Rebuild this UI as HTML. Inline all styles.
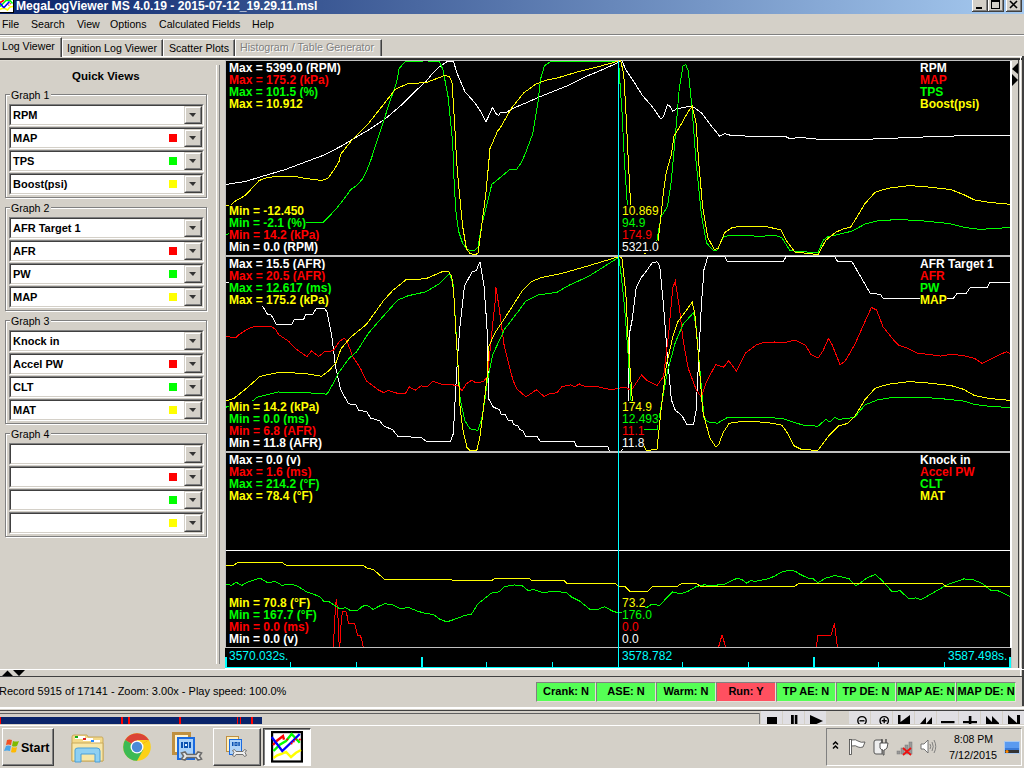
<!DOCTYPE html>
<html><head><meta charset="utf-8">
<style>
*{margin:0;padding:0;box-sizing:border-box}
html,body{width:1024px;height:768px;overflow:hidden;background:#d4d0c8;font-family:"Liberation Sans",sans-serif;font-size:11px;color:#000;position:relative}
.a{position:absolute}
.t{position:absolute;white-space:pre;line-height:1}
.b{font-weight:bold}
.combo{position:absolute;left:9px;width:195px;height:22px;background:#fff;border-top:1px solid #808080;border-left:1px solid #808080;border-right:1px solid #fff;border-bottom:1px solid #fff}
.combo:before{content:"";position:absolute;left:0;top:0;right:0;bottom:0;border-top:1px solid #404040;border-left:1px solid #404040;border-right:1px solid #d4d0c8;border-bottom:1px solid #d4d0c8}
.combo .lbl{position:absolute;left:3px;top:5px;font-weight:bold;font-size:11px;white-space:pre;line-height:1}
.combo .btn{position:absolute;left:174px;top:1px;width:18px;height:18px;background:#d4d0c8;border-top:1px solid #d4d0c8;border-left:1px solid #d4d0c8;border-right:1px solid #404040;border-bottom:1px solid #404040}
.combo .btn:before{content:"";position:absolute;left:0;top:0;right:0;bottom:0;border-top:1px solid #fff;border-left:1px solid #fff;border-right:1px solid #808080;border-bottom:1px solid #808080}
.combo .btn:after{content:"";position:absolute;left:4px;top:6px;border-left:4px solid transparent;border-right:3px solid transparent;border-top:4px solid #333;width:0;height:0}
.combo .sq{position:absolute;left:159px;top:28px;width:8px;height:8px}
.grp{position:absolute;left:5px;width:202px;border:1px solid #808080;box-shadow:inset 1px 1px 0 #fff,1px 1px 0 #fff}
.grp .gl{position:absolute;left:4px;top:-5px;background:#d4d0c8;padding:0 2px 0 1px;font-size:10.6px;white-space:pre;line-height:1}
.graph{position:absolute;left:226px;width:784px;height:194px;background:#000;overflow:hidden}
.lg{position:absolute;font-weight:bold;font-size:12px;white-space:pre;line-height:12px;background:#000}
.cv{position:absolute;font-size:12px;white-space:pre;line-height:12px;background:#000}
.ind{position:absolute;top:682px;width:60px;height:20px;border-top:1px solid #808080;border-left:1px solid #808080;border-right:1px solid #e4e0d8;border-bottom:1px solid #e4e0d8;background:#55ff55;font-weight:bold;font-size:11px;text-align:center;line-height:17px;white-space:nowrap;overflow:hidden}
.tb{position:absolute;top:711px;width:21px;height:13px;background:#e0dfe3}
</style></head><body>

<!-- title bar -->
<div class="a" style="left:0;top:0;width:1024px;height:14px;background:linear-gradient(to right,#0a246a,#a6caf0)"></div>
<svg class="a" style="left:0;top:0" width="15" height="14" viewBox="0 0 15 14">
<rect x="0" y="0" width="13" height="12" fill="#fff"/>
<rect x="13" y="0" width="1" height="13" fill="#000"/><rect x="0" y="12" width="14" height="1" fill="#000"/>
<polyline points="0,9.5 2,8.5 5,8.5 7.5,10 10,7 13,6.5" fill="none" stroke="#ff0" stroke-width="1.6"/>
<polyline points="0,6.5 2,4.5 4,2.5 6,0.5 10,0.5 12.5,3.5" fill="none" stroke="#0f0" stroke-width="1.6"/>
<polyline points="0,2.5 2,1.5 4,0" fill="none" stroke="#f00" stroke-width="1.6"/>
<polyline points="0,3.5 1.5,4.5 2.5,6.5 4,7.5 9.5,1.5" fill="none" stroke="#00f" stroke-width="1.6"/>
<polyline points="8.5,5.5 11,3" fill="none" stroke="#f00" stroke-width="1.2" stroke-dasharray="1,1"/>
</svg>
<div class="t b" style="left:16px;top:0px;font-size:12.15px;color:#fff">MegaLogViewer MS 4.0.19 - 2015-07-12_19.29.11.msl</div>
<!-- window buttons -->
<div class="a" style="left:972px;top:0;width:16px;height:12px;background:#d4d0c8;border-right:1px solid #404040;border-bottom:1px solid #404040;box-shadow:inset 1px 0 0 #fff,inset -1px -1px 0 #808080"></div>
<div class="a" style="left:988px;top:0;width:16px;height:12px;background:#d4d0c8;border-right:1px solid #404040;border-bottom:1px solid #404040;box-shadow:inset 1px 0 0 #fff,inset -1px -1px 0 #808080"></div>
<div class="a" style="left:1006px;top:0;width:16px;height:12px;background:#d4d0c8;border-right:1px solid #404040;border-bottom:1px solid #404040;box-shadow:inset 1px 0 0 #fff,inset -1px -1px 0 #808080"></div>

<div class="a" style="left:976px;top:7px;width:6px;height:2px;background:#000"></div>
<div class="a" style="left:991px;top:0px;width:9px;height:9px;border:1px solid #000;border-top:2px solid #000"></div>
<svg class="a" style="left:1009px;top:0" width="10" height="9" viewBox="0 0 10 9"><path d="M1,1 L8,8 M8,1 L1,8" stroke="#000" stroke-width="1.6"/></svg>
<!-- menu -->
<div class="t" style="left:2px;top:19px;font-size:10.6px">File</div>
<div class="t" style="left:31px;top:19px;font-size:10.6px">Search</div>
<div class="t" style="left:77px;top:19px;font-size:10.6px">View</div>
<div class="t" style="left:110px;top:19px;font-size:10.6px">Options</div>
<div class="t" style="left:159px;top:19px;font-size:10.6px">Calculated Fields</div>
<div class="t" style="left:252px;top:19px;font-size:10.6px">Help</div>
<div class="a" style="left:0;top:34px;width:1024px;height:1px;background:#808080"></div>
<div class="a" style="left:0;top:35px;width:1024px;height:1px;background:#fff"></div>

<!-- tabs -->
<div class="a" style="left:0;top:56px;width:1024px;height:1px;background:#fff"></div>
<div class="a" style="left:0;top:37px;width:62px;height:20px;background:#d4d0c8;border-top:1px solid #fff;border-right:1px solid #404040;box-shadow:inset -1px 0 0 #808080"></div>
<div class="t" style="left:2px;top:41px;font-size:10.6px">Log Viewer</div>
<div class="a" style="left:62px;top:39px;width:101px;height:17px;border-top:1px solid #fff;border-left:1px solid #fff;border-right:1px solid #404040;box-shadow:inset -1px 0 0 #808080"></div>
<div class="t" style="left:67px;top:43px;font-size:10.6px">Ignition Log Viewer</div>
<div class="a" style="left:163px;top:39px;width:72px;height:17px;border-top:1px solid #fff;border-left:1px solid #fff;border-right:1px solid #404040;box-shadow:inset -1px 0 0 #808080"></div>
<div class="t" style="left:169px;top:43px;font-size:10.6px">Scatter Plots</div>
<div class="a" style="left:235px;top:39px;width:147px;height:17px;border-top:1px solid #fff;border-left:1px solid #fff;border-right:1px solid #404040;box-shadow:inset -1px 0 0 #808080"></div>
<div class="t" style="left:241px;top:43px;font-size:10.7px;color:#fff">Histogram / Table Generator</div>
<div class="t" style="left:240px;top:42px;font-size:10.7px;color:#808080">Histogram / Table Generator</div>

<div class="a" style="left:0;top:58px;width:1024px;height:1px;background:#3c3c3c"></div>
<div class="a" style="left:0;top:59px;width:1024px;height:1px;background:#2c2c2c"></div>
<div class="a" style="left:0;top:60px;width:225px;height:1px;background:#e0dcd4"></div>

<!-- left panel -->
<div class="t b" style="left:72px;top:71px;font-size:11.5px">Quick Views</div>
<div class="grp" style="top:94px;height:104px"><div class="gl">Graph 1</div></div>
<div class="combo" style="top:104px"><div class="lbl">RPM</div><div class="btn"></div></div>
<div class="combo" style="top:127px"><div class="lbl">MAP</div><div class="sq" style="left:159px;top:6px;background:#ff0000"></div><div class="btn"></div></div>
<div class="combo" style="top:150px"><div class="lbl">TPS</div><div class="sq" style="left:159px;top:6px;background:#00ff00"></div><div class="btn"></div></div>
<div class="combo" style="top:173px"><div class="lbl">Boost(psi)</div><div class="sq" style="left:159px;top:6px;background:#ffff00"></div><div class="btn"></div></div>
<div class="grp" style="top:207px;height:104px"><div class="gl">Graph 2</div></div>
<div class="combo" style="top:217px"><div class="lbl">AFR Target 1</div><div class="btn"></div></div>
<div class="combo" style="top:240px"><div class="lbl">AFR</div><div class="sq" style="left:159px;top:6px;background:#ff0000"></div><div class="btn"></div></div>
<div class="combo" style="top:263px"><div class="lbl">PW</div><div class="sq" style="left:159px;top:6px;background:#00ff00"></div><div class="btn"></div></div>
<div class="combo" style="top:286px"><div class="lbl">MAP</div><div class="sq" style="left:159px;top:6px;background:#ffff00"></div><div class="btn"></div></div>
<div class="grp" style="top:320px;height:104px"><div class="gl">Graph 3</div></div>
<div class="combo" style="top:330px"><div class="lbl">Knock in</div><div class="btn"></div></div>
<div class="combo" style="top:353px"><div class="lbl">Accel PW</div><div class="sq" style="left:159px;top:6px;background:#ff0000"></div><div class="btn"></div></div>
<div class="combo" style="top:376px"><div class="lbl">CLT</div><div class="sq" style="left:159px;top:6px;background:#00ff00"></div><div class="btn"></div></div>
<div class="combo" style="top:399px"><div class="lbl">MAT</div><div class="sq" style="left:159px;top:6px;background:#ffff00"></div><div class="btn"></div></div>
<div class="grp" style="top:433px;height:104px"><div class="gl">Graph 4</div></div>
<div class="combo" style="top:443px"><div class="lbl"></div><div class="btn"></div></div>
<div class="combo" style="top:466px"><div class="lbl"></div><div class="sq" style="left:159px;top:6px;background:#ff0000"></div><div class="btn"></div></div>
<div class="combo" style="top:489px"><div class="lbl"></div><div class="sq" style="left:159px;top:6px;background:#00ff00"></div><div class="btn"></div></div>
<div class="combo" style="top:512px"><div class="lbl"></div><div class="sq" style="left:159px;top:6px;background:#ffff00"></div><div class="btn"></div></div>

<!-- splitter -->
<div class="a" style="left:216px;top:65px;width:1px;height:599px;background:#fff"></div>
<div class="a" style="left:219px;top:65px;width:1px;height:599px;background:#808080"></div>

<!-- graph frame -->
<div class="a" style="left:225px;top:60px;width:787px;height:609px;background:#c0c0c0"></div>
<div class="graph" style="top:61px"></div>
<div class="graph" style="top:257px"></div>
<div class="graph" style="top:453px"></div>
<div class="a" style="left:225px;top:648px;width:786px;height:19px;background:#000"></div>
<svg class="a" style="left:226px;top:60px" width="784" height="195" viewBox="0 0 784 195" shape-rendering="crispEdges">
<polyline points="0.0,124.4 19.5,121.5 35.2,116.6 58.6,109.8 82.0,101.0 96.4,95.7 114.6,86.5 127.6,78.7 143.2,69.6 158.9,59.2 177.0,43.6 190.0,30.5 200.0,21.4 205.2,15.0 213.0,7.1 222.0,1.1 227.3,1.1 231.2,13.6 239.0,31.8 249.5,43.6 254.7,51.4 259.9,61.8 262.5,56.6 266.4,47.5 270.3,54.0 272.9,55.3 274.0,52.8 280.0,52.8 285.7,48.8 297.4,44.0 313.0,37.1 332.6,29.3 342.4,25.4 356.0,18.6 361.9,15.7 371.7,11.7 391.2,3.0 394.0,0.6 395.9,0.6 399.8,9.7 407.6,21.4 416.7,35.8 425.9,46.2 435.0,59.2 437.6,56.6 441.5,44.9 444.0,46.2 446.7,51.4 450.6,48.8 459.7,47.0 466.2,46.2 475.3,52.7 483.1,63.1 493.6,76.1 498.8,73.5 505.3,75.6 522.2,76.1 558.7,76.1 563.9,78.7 574.3,77.4 592.0,79.2 612.8,80.0 657.1,78.7 685.8,77.4 722.2,76.1 753.5,75.6 784.0,75.3" fill="none" stroke="#ffffff" stroke-width="1"/>
<polyline points="0.0,174.6 14.0,170.0 78.0,162.0 97.6,162.0 109.4,149.8 117.2,140.0 125.0,129.3 130.9,125.4 136.7,118.6 140.6,110.8 144.5,101.0 153.6,73.5 164.0,41.0 170.6,22.7 173.2,8.4 179.7,1.1 200.0,1.0 213.0,1.1 217.0,9.7 222.1,37.0 226.0,76.0 227.7,101.0 227.7,112.7 229.7,149.8 232.6,171.3 236.5,183.0 241.4,189.9 248.2,190.5 252.1,187.0 256.0,163.5 260.0,147.9 265.8,124.4 271.7,119.6 283.4,109.8 290.2,109.8 295.1,103.0 299.0,94.4 306.8,73.5 312.0,42.3 314.6,18.8 318.5,5.8 325.0,1.1 392.7,1.1 393.3,13.6 395.9,50.0 398.5,102.2 401.1,141.2 406.0,180.0 419.0,190.0 431.0,180.3 435.0,156.9 441.5,146.4 445.4,120.4 449.3,76.1 453.2,29.2 457.1,5.8 459.7,4.5 462.3,11.0 466.2,50.0 470.1,102.2 475.3,154.2 480.5,183.0 487.0,190.2 491.0,190.2 497.5,176.4 509.2,175.0 535.2,176.4 548.2,175.0 556.0,177.7 563.9,190.7 592.0,192.8 597.2,180.3 602.4,176.4 610.2,175.0 625.9,171.2 638.9,164.1 651.9,160.8 672.7,159.5 696.2,160.8 722.2,163.4 737.8,167.3 753.5,169.3 769.0,168.6 784.0,167.3" fill="none" stroke="#00ff00" stroke-width="1"/>
<polyline points="0.0,145.5 5.0,145.5 7.8,142.0 19.5,135.2 33.2,120.5 39.0,118.2 50.8,116.2 68.4,116.2 78.1,118.2 95.7,120.5 101.6,118.6 107.4,110.8 113.3,101.0 114.6,94.4 125.0,81.3 140.6,65.7 156.2,46.2 169.3,29.2 182.3,23.5 200.0,22.7 218.2,15.7 223.4,16.2 226.0,22.7 228.6,63.0 230.6,101.0 232.6,124.4 236.5,165.5 240.4,188.9 244.3,193.8 250.2,194.4 252.1,192.8 256.0,163.5 260.0,132.2 262.9,101.0 263.8,89.1 271.6,71.0 274.0,68.4 285.7,47.9 297.4,33.2 309.2,24.4 318.9,20.5 332.6,17.6 352.1,11.7 371.7,6.9 389.2,2.0 392.7,1.1 394.6,0.6 397.7,13.6 399.8,50.0 402.4,102.2 405.0,151.6 411.0,185.0 418.0,193.3 431.0,190.7 433.7,167.3 437.6,130.8 440.2,112.6 445.4,94.4 448.0,76.1 455.8,63.1 462.3,51.4 466.2,46.2 470.1,63.1 472.7,102.2 476.6,146.4 481.8,177.7 488.4,189.4 492.3,188.1 498.8,172.5 506.6,167.3 522.2,166.0 537.8,166.0 554.8,169.9 560.0,180.3 569.0,192.0 592.0,194.6 599.8,180.3 610.2,172.0 618.0,168.6 624.5,167.3 631.0,156.9 638.9,143.8 649.3,132.1 662.3,128.2 683.1,125.6 701.4,126.9 724.8,129.5 737.8,134.7 748.2,139.9 763.9,142.5 784.0,144.3" fill="none" stroke="#ffff00" stroke-width="1"/>
</svg>
<div class="lg" style="left:229px;top:62px;color:#ffffff">Max = 5399.0 (RPM)</div>
<div class="lg" style="left:229px;top:74px;color:#ff0000">Max = 175.2 (kPa)</div>
<div class="lg" style="left:229px;top:86px;color:#00ff00">Max = 101.5 (%)</div>
<div class="lg" style="left:229px;top:98px;color:#ffff00">Max = 10.912</div>
<div class="lg" style="left:229px;top:205px;color:#ffff00">Min = -12.450</div>
<div class="lg" style="left:229px;top:217px;color:#00ff00">Min = -2.1 (%)</div>
<div class="lg" style="left:229px;top:229px;color:#ff0000">Min = 14.2 (kPa)</div>
<div class="lg" style="left:229px;top:241px;color:#ffffff">Min = 0.0 (RPM)</div>
<div class="lg" style="left:920px;top:62px;color:#ffffff">RPM</div>
<div class="lg" style="left:920px;top:74px;color:#ff0000">MAP</div>
<div class="lg" style="left:920px;top:86px;color:#00ff00">TPS</div>
<div class="lg" style="left:920px;top:98px;color:#ffff00">Boost(psi)</div>
<div class="cv" style="left:622px;top:205px;color:#ffff00">10.869</div>
<div class="cv" style="left:622px;top:217px;color:#00ff00">94.9</div>
<div class="cv" style="left:622px;top:229px;color:#ff0000">174.9</div>
<div class="cv" style="left:622px;top:241px;color:#ffffff">5321.0</div>
<svg class="a" style="left:226px;top:256px" width="784" height="195" viewBox="0 0 784 195" shape-rendering="crispEdges">
<polyline points="-1.0,26.4 5.0,26.4 14.0,36.0 36.1,49.2 41.4,58.0 44.9,58.6 50.2,68.0 66.0,68.0 68.3,63.3 77.7,63.3 80.0,58.0 87.0,58.0 90.0,52.7 98.8,52.7 101.1,56.2 105.8,80.0 109.4,110.0 114.6,133.4 122.4,147.7 130.2,149.0 132.8,154.2 140.6,155.6 144.5,162.0 153.6,164.7 157.6,169.9 166.7,173.8 171.9,180.3 195.3,181.6 200.0,185.0 224.7,185.0 227.3,177.7 230.0,128.2 231.6,101.0 233.5,75.2 238.4,30.3 246.2,15.6 250.1,14.7 254.0,5.9 258.0,30.3 260.9,69.4 261.9,101.0 262.5,142.5 267.4,151.3 273.2,153.3 275.2,158.2 279.1,158.2 282.0,164.0 286.0,164.0 287.9,168.9 291.8,169.3 293.8,173.8 296.7,174.4 299.6,180.6 311.3,180.6 314.3,185.5 348.4,185.5 350.4,190.4 381.6,190.4 383.6,195.3 394.0,195.9 395.9,194.6 402.4,143.8 403.7,76.1 406.3,63.1 410.2,31.9 415.4,21.4 420.6,14.9 425.9,7.1 431.0,5.8 433.7,9.7 437.6,50.1 441.5,102.2 445.4,143.8 449.3,154.2 455.8,159.5 461.0,168.6 467.5,168.6 470.1,154.2 472.7,102.2 475.3,50.1 478.0,13.6 481.8,0.5 498.8,0.5 501.4,5.5 557.4,5.5 560.0,0.5 608.9,0.5 611.5,5.5 625.9,5.5 644.1,37.1 654.5,38.4 657.1,42.3 727.4,42.3 731.3,37.1 740.4,37.1 744.3,31.3 761.3,31.3 763.9,26.1 784.0,26.1" fill="none" stroke="#ffffff" stroke-width="1"/>
<polyline points="0.0,80.8 10.4,81.3 13.2,78.5 21.4,73.2 28.5,70.3 33.2,71.0 35.5,70.3 44.9,70.3 49.6,73.2 52.5,78.5 54.7,80.0 62.5,85.2 70.3,93.0 74.0,95.8 80.8,100.6 85.7,94.8 92.6,100.6 98.4,95.8 107.2,94.8 113.0,86.0 117.9,82.1 120.9,85.0 126.7,100.6 134.5,112.4 140.4,125.0 152.1,133.8 158.0,136.8 161.9,134.2 171.7,137.4 179.5,137.4 183.4,130.9 189.2,134.2 195.1,129.9 200.9,130.9 206.8,125.0 214.6,128.0 224.4,128.4 232.2,129.9 236.1,134.8 240.0,128.0 245.9,124.1 249.8,127.0 257.6,125.6 261.5,120.2 267.4,61.6 269.3,44.0 269.8,30.6 272.9,50.1 278.1,89.1 283.3,110.0 286.9,124.0 290.8,132.8 299.6,140.6 303.5,138.6 310.4,133.8 318.2,140.6 324.0,137.7 330.9,136.7 335.8,130.8 344.5,128.9 348.4,130.8 353.3,127.9 356.2,129.9 371.9,130.8 385.5,133.8 395.3,131.8 399.8,131.3 405.0,134.7 415.4,119.1 420.6,124.3 431.0,129.5 437.6,120.4 442.8,76.1 446.7,31.9 449.3,25.3 453.2,50.1 457.1,84.0 462.3,112.6 470.1,133.4 475.3,141.2 480.5,125.6 489.7,108.7 497.5,111.3 502.7,104.8 510.5,115.2 519.6,97.0 530.0,89.1 537.8,86.5 548.2,86.0 558.7,86.5 569.0,84.0 579.5,89.1 584.7,98.3 592.0,102.2 597.2,94.4 602.4,82.6 606.3,89.1 614.1,108.7 619.3,104.8 628.5,89.1 638.9,65.7 645.4,51.4 650.6,54.0 657.1,70.9 667.5,83.9 672.7,89.1 680.5,91.8 691.0,97.0 701.4,98.3 714.4,100.1 724.8,98.3 737.8,99.6 748.2,102.2 756.0,107.4 763.9,103.5 774.3,98.3 780.8,95.7 784.0,97.5" fill="none" stroke="#ff0000" stroke-width="1"/>
<polyline points="0.0,151.1 24.0,147.0 31.2,141.2 52.0,136.0 78.1,136.5 100.2,138.1 101.3,137.8 109.2,124.0 113.0,116.3 122.8,102.6 130.6,95.8 142.4,77.2 156.0,61.6 171.7,44.0 182.3,39.7 200.0,35.8 213.0,28.0 223.4,17.5 227.3,29.2 230.0,76.1 232.6,120.4 234.2,143.5 239.0,165.0 244.0,172.8 251.8,174.4 255.7,163.0 259.6,139.6 260.5,129.0 266.7,98.7 278.5,73.3 292.0,55.7 300.0,45.0 311.7,39.0 331.2,36.2 342.9,29.3 362.4,20.5 391.7,2.0 392.7,0.6 394.6,13.6 398.5,50.1 402.4,102.2 405.0,143.8 412.0,169.0 419.3,173.8 431.0,173.8 436.3,143.8 441.5,115.2 449.3,86.5 457.1,68.3 467.5,56.6 470.1,70.9 474.0,115.2 478.0,161.4 481.8,165.9 491.6,167.2 501.4,161.4 538.5,161.4 556.0,162.4 567.8,166.3 577.6,169.2 592.0,170.2 599.8,163.4 603.7,166.0 608.9,161.5 612.8,163.4 628.5,161.5 638.9,149.0 651.9,143.8 667.5,141.2 696.2,141.2 722.2,143.3 737.8,145.1 748.2,148.5 763.9,150.3 784.0,151.6" fill="none" stroke="#00ff00" stroke-width="1"/>
<polyline points="0.0,145.1 7.8,142.5 20.8,132.1 33.9,120.4 52.0,116.5 78.1,117.3 95.5,120.2 103.3,114.3 110.1,106.5 115.0,92.8 124.8,81.1 140.4,68.4 158.0,44.0 166.7,34.5 179.7,24.0 200.0,22.7 214.0,16.6 217.9,15.0 222.8,15.6 225.7,20.5 227.7,36.2 230.6,88.9 231.6,101.0 234.2,153.3 237.1,174.8 241.0,191.4 244.0,194.3 250.8,194.3 253.7,182.6 256.6,159.2 259.6,133.8 261.2,120.4 262.8,90.8 268.7,77.2 280.4,59.6 296.0,35.2 305.8,25.4 315.6,21.5 335.0,17.6 362.4,9.8 391.7,1.0 392.7,0.6 395.9,1.9 399.8,37.1 402.4,89.1 406.3,143.8 414.0,184.0 420.6,194.6 431.0,193.3 435.0,154.2 440.2,110.0 446.7,81.3 451.9,65.7 459.7,55.3 466.2,46.2 468.8,57.9 472.7,102.2 476.6,154.2 478.0,160.4 483.8,181.9 489.7,190.7 492.6,188.7 497.5,176.0 503.3,167.2 517.0,165.3 540.4,166.3 556.0,169.2 562.0,178.0 567.8,189.7 575.6,193.6 592.0,194.3 602.4,180.3 612.8,169.9 622.0,167.3 628.5,160.8 638.9,143.8 649.3,132.1 662.3,128.2 683.1,125.6 701.4,126.9 724.8,129.5 737.8,133.4 748.2,139.4 763.9,142.5 784.0,144.4" fill="none" stroke="#ffff00" stroke-width="1"/>
</svg>
<div class="lg" style="left:229px;top:258px;color:#ffffff">Max = 15.5 (AFR)</div>
<div class="lg" style="left:229px;top:270px;color:#ff0000">Max = 20.5 (AFR)</div>
<div class="lg" style="left:229px;top:282px;color:#00ff00">Max = 12.617 (ms)</div>
<div class="lg" style="left:229px;top:294px;color:#ffff00">Max = 175.2 (kPa)</div>
<div class="lg" style="left:229px;top:401px;color:#ffff00">Min = 14.2 (kPa)</div>
<div class="lg" style="left:229px;top:413px;color:#00ff00">Min = 0.0 (ms)</div>
<div class="lg" style="left:229px;top:425px;color:#ff0000">Min = 6.8 (AFR)</div>
<div class="lg" style="left:229px;top:437px;color:#ffffff">Min = 11.8 (AFR)</div>
<div class="lg" style="left:920px;top:258px;color:#ffffff">AFR Target 1</div>
<div class="lg" style="left:920px;top:270px;color:#ff0000">AFR</div>
<div class="lg" style="left:920px;top:282px;color:#00ff00">PW</div>
<div class="lg" style="left:920px;top:294px;color:#ffff00">MAP</div>
<div class="cv" style="left:622px;top:401px;color:#ffff00">174.9</div>
<div class="cv" style="left:622px;top:413px;color:#00ff00">12.493</div>
<div class="cv" style="left:622px;top:425px;color:#ff0000">11.1</div>
<div class="cv" style="left:622px;top:437px;color:#ffffff">11.8</div>
<svg class="a" style="left:226px;top:452px" width="784" height="195" viewBox="0 0 784 195" shape-rendering="crispEdges">
<polyline points="0.0,98.0 784.0,98.0" fill="none" stroke="#ffffff" stroke-width="1"/>
<polyline points="107.4,196.0 107.7,188.0 108.5,172.0 109.4,156.0 110.4,147.0 111.3,156.0 112.4,172.0 112.8,188.0 113.5,196.0 114.2,188.8 114.7,177.8 115.5,166.0 116.6,159.0 119.4,159.0 120.6,161.4 121.7,167.0 122.5,171.2 128.4,171.2 129.5,174.0 130.7,180.2 131.5,183.3 134.2,183.3 135.4,186.4 136.6,191.1 137.4,196.0" fill="none" stroke="#ff0000" stroke-width="1"/>
<polyline points="492.3,196.0 496.0,183.0 500.0,196.0" fill="none" stroke="#ff0000" stroke-width="1"/>
<polyline points="590.0,196.0 592.0,183.4 605.0,183.4 608.4,171.2 611.5,196.0" fill="none" stroke="#ff0000" stroke-width="1"/>
<polyline points="0.0,132.1 5.2,133.4 10.4,130.3 15.6,133.4 23.4,129.5 33.9,126.1 41.7,130.8 49.5,129.5 56.0,133.4 62.5,132.1 70.3,133.4 80.7,139.9 88.5,142.5 94.0,145.0 97.9,149.3 102.6,149.3 109.6,154.0 113.1,156.4 117.4,156.4 119.0,155.3 124.5,158.5 131.5,158.5 136.2,154.4 140.1,153.2 143.2,154.4 147.1,157.5 152.6,154.4 158.9,151.6 166.7,153.0 174.5,156.9 182.3,155.5 192.7,159.5 200.0,161.5 207.8,162.6 213.0,166.8 220.8,169.9 228.6,167.3 239.0,163.4 245.6,162.0 252.1,151.6 257.3,147.7 265.1,141.2 272.9,139.9 278.1,134.7 288.5,132.9 296.4,133.9 302.9,139.1 306.8,137.3 317.2,140.7 327.6,139.1 340.6,140.7 345.8,145.1 353.6,149.0 364.0,157.4 371.9,157.4 378.4,154.8 387.5,159.5 392.7,160.8 409.0,158.0 420.6,155.5 425.9,152.2 433.7,153.5 440.2,146.4 446.7,140.0 454.5,141.8 462.3,139.1 470.1,134.7 478.0,132.9 488.4,133.4 498.8,132.1 506.6,128.2 511.8,126.1 517.0,128.2 520.9,131.3 524.8,128.2 528.7,129.5 541.7,126.9 548.2,124.3 556.0,119.9 563.9,118.3 569.0,119.1 574.3,122.5 582.1,126.1 587.3,126.9 592.0,130.8 599.8,126.1 608.9,123.5 616.7,125.1 623.2,126.9 629.8,134.0 641.5,125.6 649.3,122.5 655.8,128.2 666.2,139.9 674.0,138.6 683.1,147.0 689.7,145.9 694.9,147.7 706.6,141.2 720.9,132.9 737.8,126.9 747.0,127.7 756.0,131.3 765.2,138.6 771.7,138.6 784.0,144.4" fill="none" stroke="#00ff00" stroke-width="1"/>
<polyline points="0.0,113.1 7.8,113.1 11.7,110.5 56.0,110.5 59.9,113.1 136.7,113.1 141.9,116.5 147.1,117.3 153.6,123.0 158.9,127.7 266.4,128.2 269.0,126.1 302.9,126.1 305.5,128.2 338.0,128.2 340.6,131.3 388.8,131.3 392.7,134.0 398.5,134.0 403.7,139.1 422.0,139.1 427.2,134.0 451.9,134.0 455.8,131.3 470.1,131.3 474.0,134.0 569.0,134.0 573.0,131.3 715.7,131.3 719.6,134.0 784.0,134.0" fill="none" stroke="#ffff00" stroke-width="1"/>
</svg>
<div class="lg" style="left:229px;top:454px;color:#ffffff">Max = 0.0 (v)</div>
<div class="lg" style="left:229px;top:466px;color:#ff0000">Max = 1.6 (ms)</div>
<div class="lg" style="left:229px;top:478px;color:#00ff00">Max = 214.2 (°F)</div>
<div class="lg" style="left:229px;top:490px;color:#ffff00">Max = 78.4 (°F)</div>
<div class="lg" style="left:229px;top:597px;color:#ffff00">Min = 70.8 (°F)</div>
<div class="lg" style="left:229px;top:609px;color:#00ff00">Min = 167.7 (°F)</div>
<div class="lg" style="left:229px;top:621px;color:#ff0000">Min = 0.0 (ms)</div>
<div class="lg" style="left:229px;top:633px;color:#ffffff">Min = 0.0 (v)</div>
<div class="lg" style="left:920px;top:454px;color:#ffffff">Knock in</div>
<div class="lg" style="left:920px;top:466px;color:#ff0000">Accel PW</div>
<div class="lg" style="left:920px;top:478px;color:#00ff00">CLT</div>
<div class="lg" style="left:920px;top:490px;color:#ffff00">MAT</div>
<div class="cv" style="left:622px;top:597px;color:#ffff00">73.2</div>
<div class="cv" style="left:622px;top:609px;color:#00ff00">176.0</div>
<div class="cv" style="left:622px;top:621px;color:#ff0000">0.0</div>
<div class="cv" style="left:622px;top:633px;color:#ffffff">0.0</div>
<div class="a" style="left:618px;top:61px;width:1px;height:607px;background:#00ffff"></div>
<div class="a" style="left:225px;top:657px;width:2px;height:10px;background:#00ffff"></div>
<div class="a" style="left:290px;top:662px;width:1px;height:5px;background:#00ffff"></div>
<div class="a" style="left:356px;top:662px;width:1px;height:5px;background:#00ffff"></div>
<div class="a" style="left:421px;top:657px;width:2px;height:10px;background:#00ffff"></div>
<div class="a" style="left:486px;top:662px;width:1px;height:5px;background:#00ffff"></div>
<div class="a" style="left:552px;top:662px;width:1px;height:5px;background:#00ffff"></div>
<div class="a" style="left:682px;top:662px;width:1px;height:5px;background:#00ffff"></div>
<div class="a" style="left:748px;top:662px;width:1px;height:5px;background:#00ffff"></div>
<div class="a" style="left:813px;top:657px;width:2px;height:10px;background:#00ffff"></div>
<div class="a" style="left:878px;top:662px;width:1px;height:5px;background:#00ffff"></div>
<div class="a" style="left:944px;top:662px;width:1px;height:5px;background:#00ffff"></div>
<div class="a" style="left:1009px;top:657px;width:2px;height:10px;background:#00ffff"></div>
<div class="cv" style="left:229px;top:650px;color:#00ffff">3570.032s.</div>
<div class="cv" style="left:622px;top:650px;color:#00ffff">3578.782</div>
<div class="cv" style="left:948px;top:650px;color:#00ffff">3587.498s.</div>
<div class="a" style="left:225px;top:667px;width:786px;height:1px;background:#00ffff"></div>
<div class="a" style="left:225px;top:668px;width:799px;height:2px;background:#fff"></div>
<!-- right strip -->
<div class="a" style="left:1010px;top:61px;width:2px;height:587px;background:#fff"></div>
<div class="a" style="left:1012px;top:60px;width:6px;height:608px;background:#d4d0c8"></div>
<div class="a" style="left:1018px;top:60px;width:1px;height:608px;background:#404040"></div>
<div class="a" style="left:1020px;top:56px;width:1px;height:620px;background:#fff"></div>
<div class="a" style="left:1022px;top:56px;width:2px;height:650px;background:#404040"></div>

<svg class="a" style="left:1012px;top:62px" width="6" height="24" viewBox="0 0 6 24"><path d="M6,1 L0,7 L6,12 Z M0,12 L6,18 L0,24 Z" fill="#000"/></svg>
<div class="a" style="left:0;top:669px;width:1024px;height:1px;background:#fff"></div>
<div class="a" style="left:0;top:676px;width:1022px;height:1px;background:#404040"></div>
<svg class="a" style="left:0;top:670px" width="28" height="7" viewBox="0 0 28 7"><path d="M2,6 L7.5,0.5 L13,6 Z M13,0 L25,0 L19,6 Z" fill="#000"/></svg>

<!-- status -->
<div class="t" style="left:-1px;top:686px;font-size:11px">Record 5915 of 17141 - Zoom: 3.00x - Play speed: 100.0%</div>
<div class="ind" style="left:536px;background:#55ff55">Crank: N</div>
<div class="ind" style="left:596px;background:#55ff55">ASE: N</div>
<div class="ind" style="left:656px;background:#55ff55">Warm: N</div>
<div class="ind" style="left:716px;background:#ff5060">Run: Y</div>
<div class="ind" style="left:776px;background:#55ff55">TP AE: N</div>
<div class="ind" style="left:836px;background:#55ff55">TP DE: N</div>
<div class="ind" style="left:896px;background:#55ff55">MAP AE: N</div>
<div class="ind" style="left:956px;background:#55ff55">MAP DE: N</div>

<div class="a" style="left:0;top:707px;width:1024px;height:2px;background:#fff"></div>
<div class="a" style="left:0;top:710px;width:1024px;height:1px;background:#404040"></div>
<div class="a" style="left:0;top:713px;width:759px;height:1px;background:#606060"></div>
<div class="a" style="left:759px;top:713px;width:1px;height:11px;background:#808080"></div>
<div class="a" style="left:0;top:717px;width:262px;height:7px;background:#0a246a"></div>
<div class="a" style="left:0;top:717px;width:1px;height:7px;background:#f00"></div>
<div class="a" style="left:121px;top:717px;width:2px;height:7px;background:#f00"></div>
<div class="a" style="left:128px;top:717px;width:2px;height:7px;background:#f00"></div>
<div class="a" style="left:179px;top:717px;width:2px;height:7px;background:#f00"></div>
<div class="a" style="left:237px;top:717px;width:1px;height:7px;background:#f00"></div>
<div class="a" style="left:240px;top:717px;width:1px;height:7px;background:#f00"></div>
<div class="a" style="left:251px;top:717px;width:2px;height:7px;background:#f00"></div>
<div class="tb" style="left:761px"></div>
<div class="tb" style="left:783px"></div>
<div class="tb" style="left:805px"></div>
<div class="tb" style="left:849px"></div>
<div class="tb" style="left:871px"></div>
<div class="tb" style="left:893px"></div>
<div class="tb" style="left:915px"></div>
<div class="tb" style="left:937px"></div>
<div class="tb" style="left:959px"></div>
<div class="tb" style="left:981px"></div>
<div class="tb" style="left:1003px"></div>
<svg class="a" style="left:760px;top:704px" width="264" height="20" viewBox="760 704 264 20">
<rect x="767" y="717" width="10" height="7" fill="#000"/>
<rect x="791" y="715" width="2.8" height="9" fill="#000"/><rect x="794.8" y="715" width="2.6" height="9" fill="#000"/>
<path d="M810,715 L823,721 L810,727 Z" fill="#000"/>
<circle cx="862" cy="720.8" r="4.2" fill="none" stroke="#000" stroke-width="1.4"/><path d="M859.5,720.8 L864.5,720.8" stroke="#000" stroke-width="1.4"/>
<circle cx="884.2" cy="720.8" r="4.2" fill="none" stroke="#000" stroke-width="1.4"/><path d="M881.7,720.8 L886.7,720.8 M884.2,718.3 L884.2,723.3" stroke="#000" stroke-width="1.4"/>
<path d="M898,715 L900.5,715 L900.5,722 L910,715 L910,724 L898,724 Z" fill="#000"/>
<path d="M920,724 L926,717 L926,724 Z M926,724 L932,717 L932,724 Z" fill="#000"/>
<rect x="941" y="721" width="13.5" height="2.2" fill="#000"/>
<rect x="963" y="721" width="14" height="2.2" fill="#000"/><rect x="968.8" y="716" width="2.6" height="8" fill="#000"/>
<path d="M986,716 L993,723 L993,724 L986,724 Z M992,716 L999,723 L999,724 L992,724 Z" fill="#000"/>
<path d="M1008,715 L1017,723 L1017,715 L1020,715 L1020,724 L1008,724 Z" fill="#000"/>
</svg>


<!-- taskbar -->
<div class="a" style="left:0;top:724px;width:1024px;height:44px;background:#d4d0c8;border-top:1px solid #d4d0c8"></div>
<div class="a" style="left:0;top:725px;width:1024px;height:1px;background:#fff"></div>
<!-- start button -->
<div class="a" style="left:2px;top:728px;width:52px;height:38px;background:#d4d0c8;border-top:1px solid #fff;border-left:1px solid #fff;border-right:1px solid #404040;border-bottom:1px solid #404040;box-shadow:inset -1px -1px 0 #808080"></div>
<svg class="a" style="left:4px;top:739px" width="16" height="14" viewBox="0 0 16 14">
<path d="M3,1 Q5,0 8,1 L7,6 Q4,5 2,6 Z" fill="#f25022"/>
<path d="M9,2 Q12,3 15,2 L13,7 Q10,8 8,7 Z" fill="#7fba00"/>
<path d="M2,7 Q4,6 7,7 L6,12 Q3,11 0,12 Z" fill="#4aa6e8"/>
<path d="M8,8 Q11,9 13,8 L12,13 Q9,14 7,13 Z" fill="#ffb900"/>
</svg>
<div class="t b" style="left:21px;top:742px;font-size:12.5px">Start</div>
<!-- explorer folder -->
<svg class="a" style="left:71px;top:734px" width="33" height="30" viewBox="0 0 33 30">
<path d="M1,3 Q1,1 3,1 L16,1 L17,3 L31,3 Q32,3 32,5 L32,27 L1,27 Z" fill="#f3d98a" stroke="#c9a95a" stroke-width="1"/>
<rect x="4" y="2" width="10" height="3" fill="#fff"/><rect x="4" y="2" width="3" height="2" fill="#1a1"/>
<rect x="12" y="4" width="10" height="3" fill="#fff"/><rect x="12" y="4" width="3" height="2" fill="#d22"/>
<rect x="20" y="6" width="9" height="3" fill="#fff"/><rect x="20" y="6" width="3" height="2" fill="#28f"/>
<path d="M1,9 L32,9 L32,27 L1,27 Z" fill="#f8e7a8" stroke="#c9a95a" stroke-width="1"/>
<path d="M4,16 Q4,14 7,14 L26,14 Q29,14 29,17 L29,28 L24,28 L24,20 L10,20 L10,28 L4,28 Z" fill="#8fd0f2" stroke="#4a9fd8" stroke-width="1"/>
</svg>
<!-- chrome -->
<svg class="a" style="left:123px;top:733px" width="28" height="28" viewBox="0 0 28 28">
<circle cx="14" cy="14" r="13.8" fill="#fcd116"/>
<path d="M14,14 L2.05,7.1 A13.8,13.8 0 0 1 25.95,7.1 Z" fill="#db4437"/>
<path d="M14,14 L2.05,7.1 A13.8,13.8 0 0 0 14,27.8 L20,17 Z" fill="#3cba54"/>
<path d="M14,14 L25.95,7.1 L14,7.1 Z" fill="#fcd116"/>
<circle cx="14" cy="14" r="6.5" fill="#fff"/>
<circle cx="14" cy="14" r="5.2" fill="#4a8ad8"/>
</svg>
<!-- icon 3 -->
<svg class="a" style="left:171px;top:731px" width="32" height="32" viewBox="0 0 32 32">
<rect x="1" y="1" width="19" height="23" fill="#c09040"/>
<rect x="4" y="4" width="13" height="17" fill="#fff4d0"/>
<rect x="6" y="6" width="18" height="23" fill="#1a6ae0"/>
<rect x="8" y="8" width="14" height="19" fill="#a8d0f8"/>
<rect x="10" y="11" width="2" height="6" fill="#0a50b0"/><rect x="13" y="11" width="4" height="6" fill="#0a50b0"/><rect x="14" y="13" width="2" height="2" fill="#e0f0ff"/><rect x="18" y="11" width="2" height="6" fill="#0a50b0"/>
<path d="M10.5,22 L14,21 L16,23.5 L25,23.5 L27,21 L30.5,22 L28.5,25 L30.5,28 L27,29 L25,26.5 L16,26.5 L14,29 L10.5,28 L12.5,25 Z" fill="#e8e8e8" stroke="#6a6a6a" stroke-width="1.6"/>
</svg>
<!-- button 4 -->
<div class="a" style="left:213px;top:728px;width:48px;height:38px;background:#d4d0c8;border-top:1px solid #fff;border-left:1px solid #fff;border-right:1px solid #404040;border-bottom:1px solid #404040;box-shadow:inset -1px -1px 0 #808080"></div>
<svg class="a" style="left:225px;top:735px" width="24" height="24" viewBox="0 0 24 24">
<rect x="1.5" y="1.5" width="12" height="15" fill="#fff0c0" stroke="#c09040"/>
<rect x="4" y="4" width="13" height="16" fill="#1a6ae0"/>
<rect x="5" y="5" width="11" height="14" fill="#b0d4f8"/>
<rect x="7" y="7" width="1.5" height="4" fill="#0a50b0"/><rect x="9.5" y="7" width="3" height="4" fill="#0a50b0"/><rect x="10.5" y="8.3" width="1" height="1.4" fill="#d0e8ff"/><rect x="13.3" y="7" width="1.5" height="4" fill="#0a50b0"/>
<path d="M7.5,15.5 L9.5,14.5 L11,16.5 L18,16.5 L19.5,14.5 L21.5,15.5 L20,17.5 L21.5,20.5 L19.5,21.5 L18,19.5 L11,19.5 L9.5,21.5 L7.5,20.5 L9,17.5 Z" fill="#f0f0f0" stroke="#707070" stroke-width="1"/>
</svg>
<!-- button 5 pressed -->
<div class="a" style="left:263px;top:728px;width:48px;height:38px;background:#fff;border-top:1px solid #404040;border-left:1px solid #404040;border-right:1px solid #fff;border-bottom:1px solid #fff;box-shadow:inset 1px 1px 0 #808080"></div>
<svg class="a" style="left:271px;top:731px" width="33" height="32" viewBox="0 0 33 32">
<rect x="1.1" y="1.1" width="29.8" height="29.4" fill="#fff" stroke="#000" stroke-width="2.2"/>
<polyline points="2.5,27 6.25,24.25 10,23 15,21 20,26 25,21.75 30,19" fill="none" stroke="#ff0" stroke-width="2.4"/>
<polyline points="2.5,20 8.75,13.6 15,10 20.6,3 28.75,11.75" fill="none" stroke="#0f0" stroke-width="2.4"/>
<polyline points="2,14 5.6,10 12,5 13,8.6" fill="none" stroke="#f00" stroke-width="2.4"/>
<polyline points="0.6,6 5.6,12.4 11.25,20 22.5,9.25 28.75,3" fill="none" stroke="#00f" stroke-width="2.4"/>
<polyline points="20,13 25.6,7.75" fill="none" stroke="#f00" stroke-width="2" stroke-dasharray="1.5,1.5"/>
<circle cx="16.25" cy="8.5" r="1.1" fill="#f00"/><circle cx="28.75" cy="8.6" r="1.1" fill="#f00"/>
</svg>
<!-- tray -->
<div class="a" style="left:826px;top:728px;width:196px;height:38px;border-top:1px solid #808080;border-left:1px solid #808080;border-right:1px solid #fff;border-bottom:1px solid #fff"></div>
<svg class="a" style="left:832px;top:740px" width="8" height="10" viewBox="0 0 8 10"><path d="M1,4.5 L3.5,2 L6,4.5 M1,8.5 L3.5,6 L6,8.5" fill="none" stroke="#000" stroke-width="1.5"/></svg>
<svg class="a" style="left:848px;top:738px" width="18" height="18" viewBox="0 0 18 18"><rect x="1.5" y="1.5" width="2" height="15" fill="#fff" stroke="#444" stroke-width="0.8"/><path d="M3.5,2 Q8,1 10,3 Q13,5 17,4 L15,9 Q12,10 10,9 Q8,7 3.5,8 Z" fill="#fff" stroke="#555" stroke-width="0.9"/></svg>
<svg class="a" style="left:872px;top:738px" width="18" height="18" viewBox="0 0 18 18"><path d="M2,4 Q2,2 4,2 L10,2 L10,16 L4,16 Q2,16 2,14 Z" fill="#eee" stroke="#555" stroke-width="1"/><path d="M8,5 L16,5 L15,10 Q13,12 12,12 L12,17 L11,17 L11,12 Q9,12 8,10 Z" fill="#fff" stroke="#444" stroke-width="0.9"/><path d="M10,1 L10,5 M14,1 L14,5" stroke="#444" stroke-width="1.3"/></svg>
<svg class="a" style="left:896px;top:740px" width="18" height="16" viewBox="0 0 18 16"><rect x="1" y="11" width="3" height="3" fill="#999" stroke="#777" stroke-width="0.5"/><rect x="5" y="8" width="3" height="6" fill="#999" stroke="#777" stroke-width="0.5"/><rect x="9" y="5" width="3" height="9" fill="#999" stroke="#777" stroke-width="0.5"/><rect x="13" y="2" width="3" height="12" fill="#999" stroke="#777" stroke-width="0.5"/><path d="M7,8 L15,15 M15,8 L7,15" stroke="#e11" stroke-width="1.8"/></svg>
<svg class="a" style="left:920px;top:738px" width="18" height="18" viewBox="0 0 18 18"><path d="M1,6 L4,6 L8,2 L8,15 L4,11 L1,11 Z" fill="#fff" stroke="#666" stroke-width="0.9"/><path d="M10,6 Q11.5,8.5 10,11 M12,4 Q14.5,8.5 12,13 M14,2 Q17.5,8.5 14,15" fill="none" stroke="#777" stroke-width="0.9"/></svg>
<div class="t" style="left:954px;top:734px;font-size:10.5px">8:08 PM</div>
<div class="t" style="left:949px;top:750px;font-size:10.8px">7/12/2015</div>
<svg class="a" style="left:1004px;top:741px" width="16" height="13" viewBox="0 0 16 13"><rect x="0.5" y="0.5" width="15" height="12" fill="#3a7ad8" stroke="#a8c8f0"/><rect x="1" y="1" width="14" height="6" fill="#5a9af0"/><rect x="1" y="9" width="14" height="3" fill="#333"/><circle cx="3" cy="10.5" r="1.5" fill="#f80"/></svg>


</body></html>
